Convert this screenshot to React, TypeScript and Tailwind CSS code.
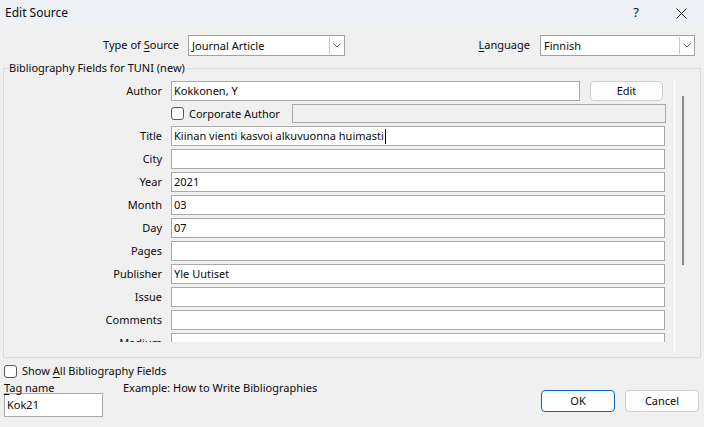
import React from "react";

const FONT = "font-['Noto_Sans','DejaVu_Sans',sans-serif]";

function Field({ label, value, caret }: { label: string; value?: string; caret?: boolean }) {
  return (
    <div className="flex h-[20px] items-center">
      <div className="w-[158px] shrink-0 text-right leading-[20px]">{label}</div>
      <div className="ml-[9px] flex h-[20px] w-[494px] items-center border border-[#a9a9a9] bg-white pl-[2px] leading-[18px]">
        <span>{value}</span>
        {caret && <span className="ml-[1px] inline-block h-[15px] w-px bg-black" />}
      </div>
    </div>
  );
}

function Combo({ value, width }: { value: string; width: string }) {
  return (
    <div className={`flex h-[21px] items-stretch border border-[#a0a0a0] bg-white ${width}`}>
      <div className="flex-1 pl-[3px] leading-[19px]">{value}</div>
      <div className="m-[1px] flex w-[14px] items-center justify-center border-l border-[#c8c8c8] bg-white">
        <svg width="8" height="5" viewBox="0 0 8 5">
          <path d="M0.5 0.5 L4 4 L7.5 0.5" fill="none" stroke="#606060" strokeWidth="1" />
        </svg>
      </div>
    </div>
  );
}

function Check({ label }: { label: React.ReactNode }) {
  return (
    <div className="flex items-center whitespace-nowrap">
      <div className="h-[13px] w-[13px] shrink-0 rounded-[3px] border border-[#5a5a5a] bg-white" />
      <span className="ml-[5px] leading-[14px]">{label}</span>
    </div>
  );
}

export default function App() {
  return (
    <div className={`flex h-[427px] w-[704px] flex-col overflow-hidden whitespace-nowrap bg-[#f0f0f0] text-[11px] text-[#0b0b0b] ${FONT}`}>
      {/* title bar */}
      <div className="flex h-[26px] shrink-0 items-center bg-[#eef2f7] pl-[5px]">
        <span className="text-[12px]">Edit Source</span>
        <div className="flex-1" />
        <span className="mr-[37px] text-[13px]">?</span>
        <svg width="11" height="11" viewBox="0 0 11 11" className="mr-[17px]">
          <path d="M0.5 0.5 L10.5 10.5 M10.5 0.5 L0.5 10.5" stroke="#1a1a1a" strokeWidth="1" />
        </svg>
      </div>

      {/* source type + language */}
      <div className="mt-[9px] flex h-[21px] items-center pr-[9px]">
        <div className="w-[179px] text-right">
          Type of <span className="underline underline-offset-2">S</span>ource
        </div>
        <div className="ml-[9px]">
          <Combo value="Journal Article" width="w-[157px]" />
        </div>
        <div className="flex-1" />
        <div>
          <span className="underline underline-offset-2">L</span>anguage
        </div>
        <div className="ml-[10px]">
          <Combo value="Finnish" width="w-[155px]" />
        </div>
      </div>

      {/* bibliography fields */}
      <fieldset className="mx-[3px] mt-[4px] h-[298px] border border-[#dcdcdc] px-0 pb-0">
        <legend className="ml-[4px] px-[1px] leading-[16px]">Bibliography Fields for TUNI (new)</legend>
        <div className="flex h-[280px]">
          <div className="mt-[5px] flex h-[261px] w-[662px] flex-col gap-[3px] overflow-hidden">
            <div className="flex h-[20px] items-center">
              <div className="w-[158px] shrink-0 text-right">Author</div>
              <div className="ml-[9px] h-[20px] w-[409px] border border-[#a9a9a9] bg-white pl-[2px] leading-[18px]">
                Kokkonen, Y
              </div>
              <div className="ml-[10px] h-[20px] w-[73px] rounded-[4px] border border-[#d0d0d0] bg-[#fdfdfd] text-center leading-[18px]">
                Edit
              </div>
            </div>
            <div className="flex h-[20px] items-center">
              <div className="w-[167px] shrink-0" />
              <div className="w-[121px] shrink-0">
                <Check label="Corporate Author" />
              </div>
              <div className="h-[19px] w-[374px] border border-[#a9a9a9] bg-[#f0f0f0]" />
            </div>
            <Field label="Title" value="Kiinan vienti kasvoi alkuvuonna huimasti" caret />
            <Field label="City" />
            <Field label="Year" value="2021" />
            <Field label="Month" value="03" />
            <Field label="Day" value="07" />
            <Field label="Pages" />
            <Field label="Publisher" value="Yle Uutiset" />
            <Field label="Issue" />
            <Field label="Comments" />
            <Field label="Medium" />
          </div>
          <div className="ml-[8px] mt-[3px] h-[274px] w-px bg-white" />
          <div className="ml-[7px] mt-[20px] h-[169px] w-[2px] bg-[#8a8a8a]" />
        </div>
      </fieldset>

      {/* bottom */}
      <div className="flex flex-1 pl-[4px] pr-[5px]">
        <div className="flex flex-col">
          <div className="mt-[6px] h-[14px]">
            <Check label={<>Show <span className="underline underline-offset-2">A</span>ll Bibliography Fields</>} />
          </div>
          <div className="relative z-10 mt-[3px] flex h-[14px] leading-[14px]">
            <span className="w-[119px]">
              <span className="underline underline-offset-2">T</span>ag name
            </span>
            <span>Example: How to Write Bibliographies</span>
          </div>
          <div className="mt-[-2px] h-[24px] w-[99px] border border-[#a9a9a9] bg-white pl-[2px] leading-[22px]">Kok21</div>
        </div>
        <div className="flex-1" />
        <div className="mt-[32px] flex gap-[10px]">
          <div className="h-[22px] w-[74px] rounded-[4px] border border-[#0067c0] bg-[#fdfdfd] text-center leading-[20px]">OK</div>
          <div className="h-[22px] w-[74px] rounded-[4px] border border-[#d0d0d0] bg-[#fdfdfd] text-center leading-[20px]">Cancel</div>
        </div>
      </div>
    </div>
  );
}
